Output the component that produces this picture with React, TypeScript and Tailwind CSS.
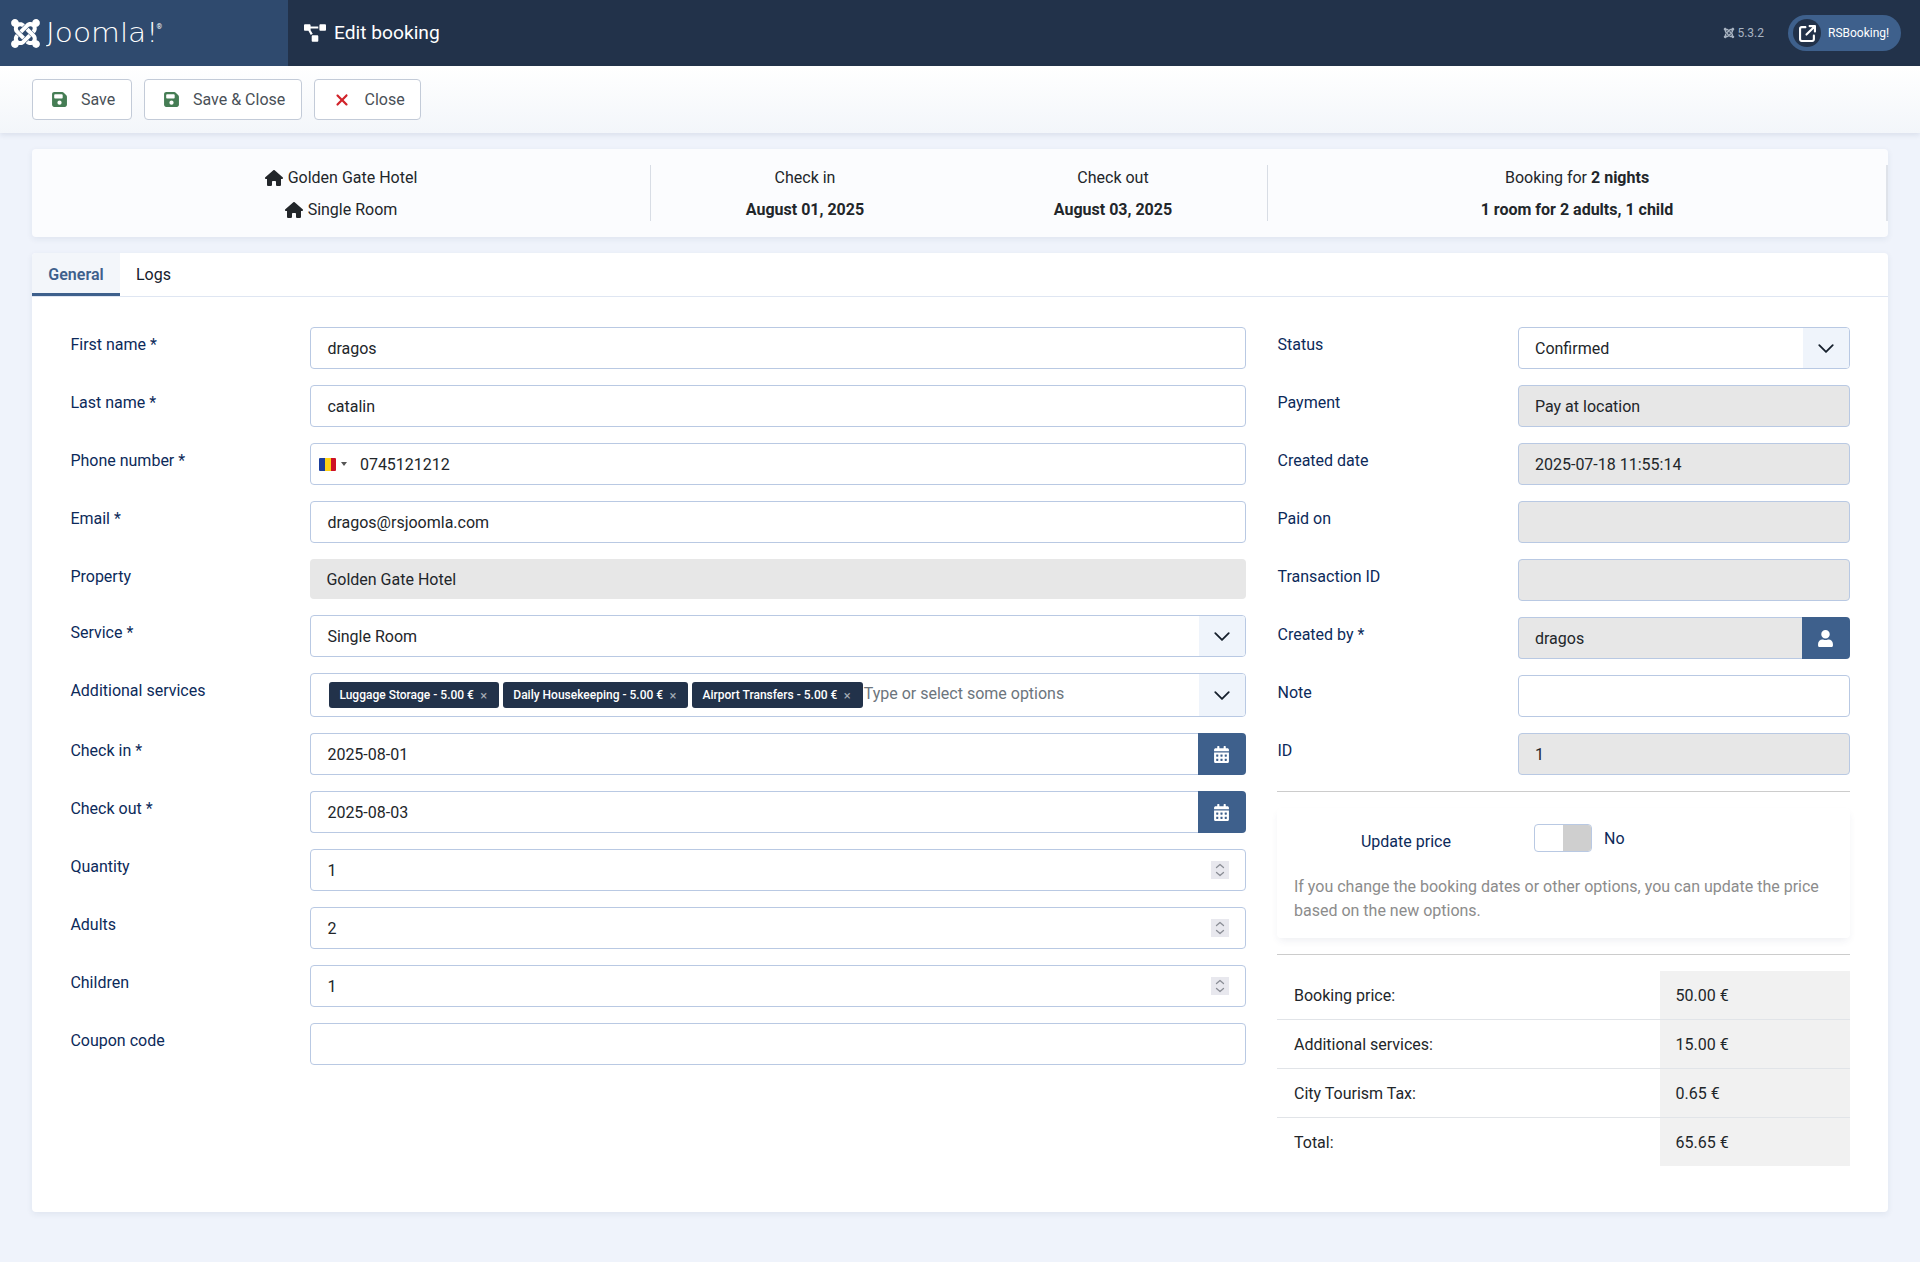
import { FaArrowUpRightFromSquare, FaFloppyDisk, FaHouse, FaXmark } from "react-icons/fa6"
import { FaCalendarAlt, FaJoomla, FaProjectDiagram, FaUser } from "react-icons/fa"

const inputClass =
  "h-[42px] w-full rounded-[4px] border border-[#b9c9e3] bg-white px-4 text-base text-[#22262a] outline-none"
const readOnlyClass =
  "h-[42px] w-full rounded-[4px] border border-[#b9c9e3] bg-[#e7e7e7] px-4 text-base text-[#22262a] outline-none"
const labelClass = "pt-[6px] text-base leading-6 text-[#0c2a5a]"

function Chevron() {
  return (
    <svg width="18" height="18" viewBox="0 0 16 16" fill="none" stroke="#16202c" strokeWidth="1.6" strokeLinecap="round" strokeLinejoin="round">
      <path d="m2 5.5 6 6 6-6" />
    </svg>
  )
}

function Spinner() {
  return (
    <span className="absolute right-[17px] top-3 flex size-[18px] items-center justify-center bg-[#e8e8ee]">
      <svg width="12" height="16" viewBox="0 0 12 16" fill="none" stroke="#8b8e96" strokeWidth="1.3" strokeLinecap="round" strokeLinejoin="round">
        <path d="M2.5 5.5 6 2.5l3.5 3M2.5 10.5 6 13.5l3.5-3" />
      </svg>
    </span>
  )
}

function Row({ label, width, children }: { label: string; width: string; children: React.ReactNode }) {
  return (
    <div className="flex">
      <div className={`${width} shrink-0 ${labelClass}`}>{label}</div>
      <div className="min-w-0 flex-1">{children}</div>
    </div>
  )
}

function TextInput({ value }: { value: string }) {
  return <input className={inputClass} defaultValue={value} />
}

function ReadOnly({ value }: { value: string }) {
  return <input className={readOnlyClass} defaultValue={value} readOnly />
}

function SelectBox({ value }: { value: string }) {
  return (
    <div className="flex h-[42px] overflow-hidden rounded-[4px] border border-[#b9c9e3] bg-white">
      <div className="flex flex-1 items-center px-4 pt-px text-base text-[#22262a]">{value}</div>
      <div className="flex w-[46px] items-center justify-center bg-[#eff4fb]">
        <Chevron />
      </div>
    </div>
  )
}

function DateInput({ value }: { value: string }) {
  return (
    <div className="flex h-[42px]">
      <input className="min-w-0 flex-1 rounded-l-[4px] border border-r-0 border-[#b9c9e3] bg-white px-4 pt-px text-base text-[#22262a] outline-none" defaultValue={value} />
      <div className="flex w-[48px] items-center justify-center rounded-r-[4px] bg-[#3e608c] text-white">
        <FaCalendarAlt size={17} />
      </div>
    </div>
  )
}

function NumberInput({ value }: { value: string }) {
  return (
    <div className="relative">
      <input className={inputClass} defaultValue={value} />
      <Spinner />
    </div>
  )
}

function Tag({ text }: { text: string }) {
  return (
    <span className="flex h-[26px] shrink-0 items-center rounded-[3px] bg-[#22324a] pl-[10px] pr-3 text-xs font-medium whitespace-nowrap text-white">
      {text}
      <span className="ml-[6.4px] text-[13px] leading-none font-normal text-[#a5acb6]">×</span>
    </span>
  )
}

function ToolbarButton({ icon, text, width, padding }: { icon: React.ReactNode; text: string; width: string; padding: string }) {
  return (
    <button className={`flex h-[41px] items-center rounded-[4px] border border-[#c3cbd8] bg-white text-base text-[#495057] ${width} ${padding}`}>
      {icon}
      {text}
    </button>
  )
}

const totals = [
  ["Booking price:", "50.00 €"],
  ["Additional services:", "15.00 €"],
  ["City Tourism Tax:", "0.65 €"],
  ["Total:", "65.65 €"],
]

export default function App() {
  return (
    <div className="min-h-screen bg-[#eff3fb] font-['Roboto',sans-serif] text-[#22262a]">
      {/* Top bar */}
      <header className="flex h-[66px] items-center bg-[#22324a] text-white">
        <div className="flex h-full w-[288px] items-center bg-[#2f4a6e] pl-[9px]">
          <FaJoomla size={33} />
          <span className="ml-[4px] origin-left scale-x-[1.14] font-['DejaVu_Sans',sans-serif] text-[26px] leading-none font-extralight">Joomla!</span>
          <span className="-mt-3 ml-[12px] text-[7px] leading-none">®</span>
        </div>
        <div className="ml-4 flex items-center gap-2 text-[19.2px]">
          <FaProjectDiagram size={22} />
          Edit booking
        </div>
        <div className="ml-auto flex items-center pr-[19px]">
          <div className="flex items-center gap-[2px] text-xs text-[#a9b4c2]">
            <FaJoomla size={12} />
            5.3.2
          </div>
          <div className="ml-6 flex h-9 w-[113px] items-center rounded-full bg-[#3e608c] pl-[5px]">
            <span className="flex size-[28px] items-center justify-center rounded-full bg-[#22324a]">
              <FaArrowUpRightFromSquare size={17} />
            </span>
            <span className="ml-[7px] text-xs">RSBooking!</span>
          </div>
        </div>
      </header>

      {/* Toolbar */}
      <div className="flex h-[67px] items-center gap-3 bg-gradient-to-b from-white to-[#f3f6fa] px-8 shadow-[0_2px_5px_rgba(40,60,100,0.1)]">
        <ToolbarButton width="w-[100px]" padding="pl-[18px]" text="Save" icon={<FaFloppyDisk size={17} className="mr-[13px] text-[#457d54]" />} />
        <ToolbarButton width="w-[158px]" padding="pl-[18px]" text="Save & Close" icon={<FaFloppyDisk size={17} className="mr-[13px] text-[#457d54]" />} />
        <ToolbarButton width="w-[107px]" padding="pl-[18px]" text="Close" icon={<FaXmark size={18} className="mr-[13.5px] text-[#d1232a]" />} />
      </div>

      <main className="px-8 pt-4">
        {/* Booking summary */}
        <section className="flex h-[88px] items-center rounded-[4px] bg-[#fbfcfe] shadow-[0_2px_6px_rgba(40,60,100,0.08)]">
          <div className="flex h-14 w-[619px] flex-col gap-2 border-r border-[#d8dde5] pt-px text-center leading-6">
            <div className="flex items-center justify-center gap-[5px]"><FaHouse size={18} />Golden Gate Hotel</div>
            <div className="flex items-center justify-center gap-[5px]"><FaHouse size={18} />Single Room</div>
          </div>
          <div className="flex h-14 w-[617px] border-r border-[#d8dde5] pt-px text-center leading-6">
            <div className="flex flex-1 flex-col gap-2">
              <div>Check in</div>
              <div className="font-bold">August 01, 2025</div>
            </div>
            <div className="flex flex-1 flex-col gap-2">
              <div>Check out</div>
              <div className="font-bold">August 03, 2025</div>
            </div>
          </div>
          <div className="flex h-14 flex-1 flex-col gap-2 border-r-2 border-[#dfe3ea] pt-px text-center leading-6">
            <div>Booking for <b>2 nights</b></div>
            <div className="font-bold">1 room for 2 adults, 1 child</div>
          </div>
        </section>

        {/* Form card */}
        <section className="mt-4 h-[959px] rounded-[4px] bg-white shadow-[0_2px_6px_rgba(40,60,100,0.08)]">
          <div className="flex h-[44px] border-b border-[#dfe6f2]">
            <div className="flex h-[43px] w-[88px] items-center justify-center rounded-tl-[4px] border-b-[3px] border-[#3e608c] bg-[#f3f6fa] pt-[3px] font-semibold text-[#3e608c]">General</div>
            <div className="flex h-[43px] items-center px-4 text-[#16202c]">Logs</div>
          </div>

          <div className="flex gap-[31px] px-[38px] pt-[30px]">
            {/* Left column */}
            <div className="ml-[0.4px] flex w-[1175.6px] flex-col gap-4">
              <Row label="First name *" width="w-[240px]"><TextInput value="dragos" /></Row>
              <Row label="Last name *" width="w-[240px]"><TextInput value="catalin" /></Row>
              <Row label="Phone number *" width="w-[240px]">
                <div className="flex h-[42px] items-center rounded-[4px] border border-[#b9c9e3] bg-white pl-2">
                  <span className="flex h-[13px] w-[17px] overflow-hidden rounded-[1px]">
                    <span className="flex-1 bg-[#1b3d9c]" />
                    <span className="flex-1 bg-[#fcd116]" />
                    <span className="flex-1 bg-[#ce1126]" />
                  </span>
                  <span className="ml-[5px] size-0 border-x-[3px] border-t-[4px] border-x-transparent border-t-[#555]" />
                  <span className="ml-[12.5px] pt-px">0745121212</span>
                </div>
              </Row>
              <Row label="Email *" width="w-[240px]"><TextInput value="dragos@rsjoomla.com" /></Row>
              <Row label="Property" width="w-[240px]">
                <div className="flex h-10 items-center rounded-[4px] bg-[#e7e7e7] px-4 pt-px">Golden Gate Hotel</div>
              </Row>
              <Row label="Service *" width="w-[240px]"><SelectBox value="Single Room" /></Row>
              <Row label="Additional services" width="w-[240px]">
                <div className="flex h-11 overflow-hidden rounded-[4px] border border-[#b9c9e3] bg-white">
                  <div className="flex flex-1 items-center gap-1 pl-[18px]">
                    <Tag text="Luggage Storage - 5.00 €" />
                    <Tag text="Daily Housekeeping - 5.00 €" />
                    <Tag text="Airport Transfers - 5.00 €" />
                    <span className="-ml-[3px] -mt-[3px] text-[#6c757d]">Type or select some options</span>
                  </div>
                  <div className="flex w-[46px] items-center justify-center bg-[#eff4fb]"><Chevron /></div>
                </div>
              </Row>
              <Row label="Check in *" width="w-[240px]"><DateInput value="2025-08-01" /></Row>
              <Row label="Check out *" width="w-[240px]"><DateInput value="2025-08-03" /></Row>
              <Row label="Quantity" width="w-[240px]"><NumberInput value="1" /></Row>
              <Row label="Adults" width="w-[240px]"><NumberInput value="2" /></Row>
              <Row label="Children" width="w-[240px]"><NumberInput value="1" /></Row>
              <Row label="Coupon code" width="w-[240px]"><TextInput value="" /></Row>
            </div>

            {/* Right column */}
            <div className="flex w-[573px] flex-col gap-4">
              <Row label="Status" width="w-[241px] pl-[0.5px]"><SelectBox value="Confirmed" /></Row>
              <Row label="Payment" width="w-[241px] pl-[0.5px]"><ReadOnly value="Pay at location" /></Row>
              <Row label="Created date" width="w-[241px] pl-[0.5px]"><ReadOnly value="2025-07-18 11:55:14" /></Row>
              <Row label="Paid on" width="w-[241px] pl-[0.5px]"><ReadOnly value="" /></Row>
              <Row label="Transaction ID" width="w-[241px] pl-[0.5px]"><ReadOnly value="" /></Row>
              <Row label="Created by *" width="w-[241px] pl-[0.5px]">
                <div className="flex h-[42px]">
                  <input className="min-w-0 flex-1 rounded-l-[4px] border border-r-0 border-[#b9c9e3] bg-[#e7e7e7] px-4 pt-px text-base outline-none" defaultValue="dragos" readOnly />
                  <div className="flex w-[48px] items-center justify-center rounded-r-[4px] bg-[#3e608c] text-white"><FaUser size={17} /></div>
                </div>
              </Row>
              <Row label="Note" width="w-[241px] pl-[0.5px]"><TextInput value="" /></Row>
              <Row label="ID" width="w-[241px] pl-[0.5px]"><ReadOnly value="1" /></Row>

              <hr className="border-[#cccccc]" />

              <div className="h-[130px] rounded-[4px] bg-white pl-[17px] pr-4 pt-4 shadow-[0_4px_8px_-2px_rgba(40,60,100,0.09)]">
                <div className="flex pl-[67px]">
                  <div className="w-[173px] pt-[6px] leading-6 text-[#0c2a5a]">Update price</div>
                  <div className="flex h-7 w-[58px] overflow-hidden rounded-[4px] border border-[#b9c9e3] bg-white">
                    <span className="flex-1" />
                    <span className="flex-1 bg-[#cfcfcf]" />
                  </div>
                  <div className="ml-3 pt-[3px] leading-6 text-[#0c2a5a]">No</div>
                </div>
                <p className="mt-[21px] leading-6 text-[#8c8c8c]">If you change the booking dates or other options, you can update the price based on the new options.</p>
              </div>

              <hr className="border-[#cccccc]" />

              <div>
                {totals.map(([name, price], i) => (
                  <div key={name} className={`flex items-stretch ${i < 3 ? "h-[49px] border-b border-[#e1e4e8]" : "h-12"}`}>
                    <div className="flex flex-1 items-center pl-[17px] pt-px">{name}</div>
                    <div className="flex w-[190px] items-center bg-[#f1f1f1] pl-[15.5px] pt-px">{price}</div>
                  </div>
                ))}
              </div>
            </div>
          </div>
        </section>
      </main>
    </div>
  )
}
